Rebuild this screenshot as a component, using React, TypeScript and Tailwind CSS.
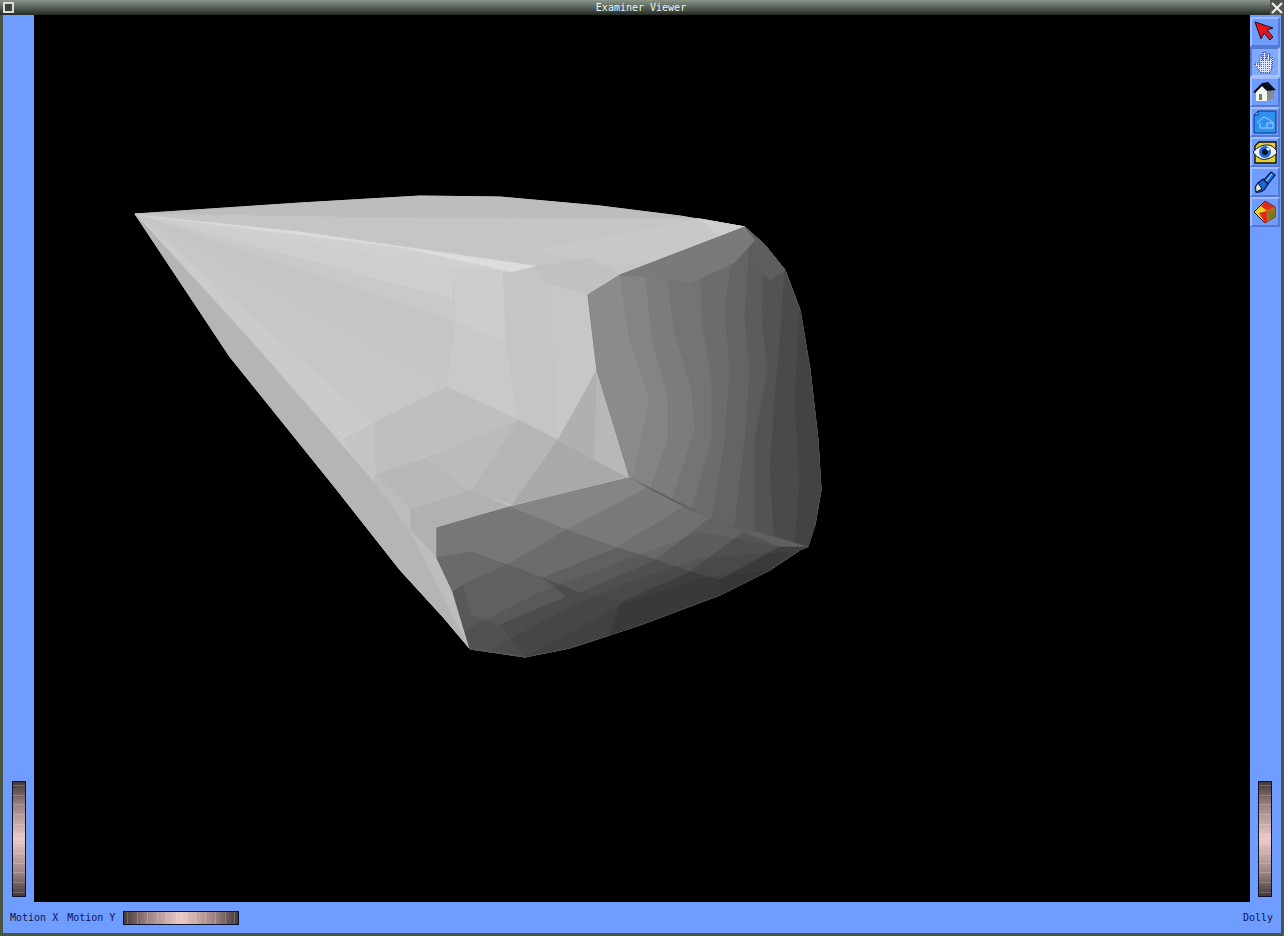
const MONO = "font-['DejaVu_Sans_Mono','Liberation_Mono',monospace]";

// strip boundaries on the dark side of the shape, left to right
const STRIP_LINES = [
  "588,295 597,370 630,478",
  "620,275 630,340 650,400 640,447 632,480",
  "645,268 652,340 668,395 668,440 650,490",
  "667,272 674,330 692,390 695,430 672,500",
  "700,255 702,320 712,380 712,440 692,510",
  "735,238 725,310 730,370 725,440 712,520",
  "750,240 745,320 750,370 745,440 735,528",
  "765,245 762,320 768,370 755,440 755,538",
  "785,270 780,340 775,400 770,470 775,545",
  "800,310 795,400 800,480 795,547",
  "800,310 810,370 818,440 821,490 815,525 808,547",
];
const STRIP_FILLS = ["#8b8b8b", "#848484", "#7c7c7c", "#747474", "#6c6c6c", "#646464", "#5c5c5c", "#535353", "#4a4a4a", "#434343"];

function strip(i: number) {
  return STRIP_LINES[i] + " " + STRIP_LINES[i + 1].split(" ").reverse().join(" ");
}

// faceted shape, screen coordinates, painted back to front
const FACETS: [string, string][] = [
  // silhouette base
  ["135,214 300,203 420,196 500,197 600,206 680,216 745,227 765,245 785,270 800,310 810,370 818,440 821,490 815,525 800,550 770,570 720,595 640,625 570,648 525,657 470,649 443,617 400,570 337,490 230,357", "#c4c4c4"],
  // top band
  ["135,214 300,203 420,196 500,197 600,206 680,216 745,227 700,219 400,218", "#bdbdbd"],
  ["135,214 400,218 700,219 745,227 725,240 620,275 588,295 550,285 503,273 453,267", "#c5c5c5"],
  ["535,250 700,219 725,240 660,262 590,262", "#c8c8c8"],
  ["535,267 590,258 620,275 588,295 550,285", "#c1c1c1"],
  ["700,219 745,227 725,240", "#cfcfcf"],
  // fan from the tip
  ["135,214 453,267 453,300", "#cecece"],
  ["135,214 453,300 456,322 300,270", "#c9c9c9"],
  ["135,214 300,270 456,322 503,342 447,387", "#c5c5c5"],
  ["135,214 447,387 373,423", "#c7c7c7"],
  ["135,214 373,423 343,440", "#cbcbcb"],
  ["135,214 343,440 375,483 250,340", "#c9c9c9"],
  ["135,214 250,340 375,483 410,530 453,592 470,649 443,617 400,570 337,490 230,357", "#b5b5b5"],
  // highlight streak
  ["145,216 300,232 535,266 510,272 400,248", "#dcdcdc"],
  ["145,216 400,248 510,272 453,267", "#d0d0d0"],
  // columns
  ["453,267 503,273 505,342 456,322", "#cdcdcd"],
  ["456,322 505,342 518,420 447,387", "#c9c9c9"],
  ["503,273 550,285 558,440 518,420", "#c5c5c5"],
  ["550,285 588,295 597,370 558,440", "#c7c7c7"],
  // lower left patches
  ["373,423 447,387 518,420 375,475", "#bfbfbf"],
  ["343,440 373,423 375,475 375,483", "#c4c4c4"],
  ["375,475 425,458 470,490 410,510", "#b8b8b8"],
  ["425,458 518,420 472,490", "#bbbbbb"],
  ["518,420 558,440 512,505 472,490", "#b5b5b5"],
  ["410,510 472,490 510,507 437,528 437,558 410,530", "#b1b1b1"],
  ["375,475 410,510 410,530 375,483", "#bcbcbc"],
  ["410,530 437,558 453,592 470,649", "#bdbdbd"],
  ["558,440 595,460 630,478 512,505", "#a9a9a9"],
  ["597,370 558,440 595,460", "#b0b0b0"],
  ["597,370 595,460 630,478", "#b8b8b8"],
  // dark side, filled under the strips
  ["588,295 620,275 745,227 765,245 785,270 800,310 810,370 818,440 821,490 815,525 808,547 780,547 743,533 710,518 630,478 597,370", "#6a6a6a"],
  ...STRIP_FILLS.map((fill, i): [string, string] => [strip(i), fill]),
  // cap along the top ridge
  ["620,275 745,227 755,240 735,262 690,283 665,278", "#7a7a7a"],
  ["745,227 765,245 785,270 770,280 750,262 755,240", "#5e5e5e"],
  // under the lower band, closes the seam along the ridge
  ["437,528 510,507 630,478 710,518 808,547 800,550 770,570 720,595 640,625 570,648 525,657 470,649 453,592 437,558", "#606060"],
  // lower band, rows from the ridge down
  ["510,507 630,478 647,488 567,530", "#858585"],
  ["647,488 683,507 617,548 567,530", "#7a7a7a"],
  ["683,507 710,518 657,560 617,548", "#707070"],
  ["710,518 743,533 690,572 657,560", "#636363"],
  ["743,533 780,547 720,580 690,572", "#555555"],
  ["780,547 808,547 800,550 770,570 720,595 720,580", "#444444"],
  ["437,528 510,507 567,530 507,565 472,552 437,558", "#777777"],
  ["507,565 567,530 617,548 543,578", "#6c6c6c"],
  ["543,578 617,548 657,560 580,593", "#606060"],
  ["580,593 657,560 690,572 620,603", "#555555"],
  ["620,603 690,572 720,580 720,595 640,625 610,635", "#494949"],
  ["437,558 472,552 507,565 463,585 453,592", "#6a6a6a"],
  ["463,585 507,565 543,578 567,597 500,625 470,615", "#606060"],
  ["500,625 567,597 543,578 580,593 620,603 610,635 570,648 525,657", "#525252"],
  ["453,592 463,585 470,615 500,625 525,657 470,649", "#585858"],
  // darkening contours along the bottom edge
  ["465,630 540,592 620,562 700,532 780,547 808,547 800,550 770,570 720,595 640,625 570,648 525,657 470,649", "#00000012"],
  ["490,650 560,612 620,585 700,558 790,552 770,570 720,595 640,625 570,648 525,657", "#00000012"],
  ["525,657 575,630 620,605 700,578 770,570 720,595 640,625 570,648", "#00000012"],
];

const TICKS = Array.from({ length: 12 });

function VWheel() {
  return (
    <div className="flex h-[116px] w-[14px] flex-col justify-between border border-[#0c1230] bg-[linear-gradient(to_bottom,#443838,#9a8280_20%,#eccac8_50%,#9a8280_80%,#443838)] py-[3px]">
      {TICKS.map((_, i) => (
        <div key={i} className="h-px bg-white/20" />
      ))}
    </div>
  );
}

function HWheel() {
  return (
    <div className="flex h-[14px] w-[116px] justify-between border border-[#0c1230] bg-[linear-gradient(to_right,#443838,#9a8280_20%,#eccac8_50%,#9a8280_80%,#443838)] px-[3px]">
      {TICKS.map((_, i) => (
        <div key={i} className="w-px bg-white/20" />
      ))}
    </div>
  );
}

function ToolButton({ active, children }: { active?: boolean; children: React.ReactNode }) {
  return (
    <div
      className={
        active
          ? "flex size-[30px] items-center justify-center border-2 border-t-[#5578d0] border-r-[#a9c3ff] border-b-[#a9c3ff] border-l-[#5578d0] bg-[#7fa8ff]"
          : "flex size-[30px] items-center justify-center border-2 border-t-[#a0bcff] border-r-[#5578d0] border-b-[#5578d0] border-l-[#a0bcff] bg-[#6f9dff]"
      }
    >
      {children}
    </div>
  );
}

function ArrowIcon() {
  return (
    <svg width="24" height="24" viewBox="0 0 24 24">
      <path d="M2 2 L8 19 L11 13 L17 20 L20 17 L14 10 L20 8 Z" fill="#e8141c" stroke="#20101c" strokeWidth="1" />
    </svg>
  );
}

function HandIcon() {
  return (
    <svg width="24" height="24" viewBox="0 0 24 24">
      <defs>
        <pattern id="hand-dither" width="2" height="2" patternUnits="userSpaceOnUse">
          <rect width="2" height="2" fill="#dfe8ff" />
          <rect width="1" height="1" fill="#4f68b8" />
        </pattern>
      </defs>
      <path d="M8 23 L2 15 L2 13 L5 13 L7 16 L7 5 L9 5 L10 11 L10 2 L13 2 L13 10 L15 3 L17 4 L16 11 L18 7 L20 8 L19 18 L17 23 Z" fill="url(#hand-dither)" stroke="#2c3c80" strokeWidth="1" strokeDasharray="1 1" />
    </svg>
  );
}

function HomeIcon() {
  return (
    <svg width="24" height="24" viewBox="0 0 24 24">
      <path d="M3 12 L3 21 L14 21 L14 11 L9 6 Z" fill="#f4f4f0" />
      <path d="M14 11 L21 10 L21 18 L14 21 Z" fill="#8a8a8a" />
      <path d="M0 12 L9 3 L15 2 L23 10 L14 11 L9 6 L2 13 Z" fill="#0c0c14" />
      <rect x="6" y="14" width="3" height="6" fill="#777" />
    </svg>
  );
}

function SetHomeIcon() {
  return (
    <svg width="24" height="24" viewBox="0 0 24 24">
      <path d="M5 1 L23 1 L23 23 L1 23 L1 5 Z" fill="#2f90f4" stroke="#0d2f78" strokeWidth="1" />
      <path d="M5 1 L5 5 L1 5 Z" fill="#9cc8ff" stroke="#0d2f78" strokeWidth="1" />
      <path d="M4 13 L11 7 L17 10 L20 13 L20 18 L7 18 L7 13 M14 18 L14 13 L20 13" fill="none" stroke="#a8d0ff" strokeWidth="1" />
    </svg>
  );
}

function EyeIcon() {
  return (
    <svg width="24" height="24" viewBox="0 0 24 24">
      <path d="M6 2 L23 2 L23 23 L2 23 L2 6 Z" fill="#e0d030" stroke="#101010" strokeWidth="1.4" />
      <path d="M0 12 Q7 4 16 5 Q23 7 24 13 Q16 21 8 19 Q3 17 0 12 Z" fill="#f4f4f4" stroke="#10182c" strokeWidth="1" />
      <circle cx="12" cy="12" r="6" fill="#1c6cd8" />
      <circle cx="12" cy="12" r="3" fill="#06122e" />
      <circle cx="15" cy="9" r="1.6" fill="#fff" />
    </svg>
  );
}

function LightIcon() {
  return (
    <svg width="24" height="24" viewBox="0 0 24 24">
      <path d="M11 10 L18 2 L22 5 L15 14 Z" fill="#1878f0" stroke="#061640" strokeWidth="1.2" />
      <path d="M10 9 L15 14 L11 20 Q7 23 3 22 Q1 17 5 13 Z" fill="#1468d8" stroke="#061640" strokeWidth="1.2" />
      <path d="M3 22 Q1 17 5 13 L9 19 Z" fill="#e6e6c0" stroke="#061640" strokeWidth="1" />
      <path d="M13 11 L19 4" stroke="#bcdcff" strokeWidth="1" />
    </svg>
  );
}

function CubeIcon() {
  return (
    <svg width="24" height="24" viewBox="0 0 24 24">
      <path d="M1 12 L12 1 L22 7 L22 17 L12 23 Z" fill="#e8d020" stroke="#1a1a1a" strokeWidth="1" />
      <path d="M12 1 L22 7 L14 11 L8 6 Z" fill="#e02c1c" />
      <path d="M6 13 L14 11 L15 22 L12 23 Z" fill="#e0281c" />
      <path d="M14 11 L22 7 L22 17 L15 22 Z" fill="#a07018" />
      <path d="M16 14 L21 10 L21 16 L16 20 Z" fill="#5c8420" />
    </svg>
  );
}

export default function App() {
  return (
    <div className="flex h-[936px] w-[1284px] flex-col overflow-hidden bg-[#4a554a]">
      {/* window title bar */}
      <div className="flex h-[15px] shrink-0 items-center justify-between bg-[linear-gradient(to_bottom,#8b968a,#5d665d_45%,#242924)]">
        <div className="ml-[3px] size-[11px] border-2 border-[#d8ddd8] bg-[#3a423a]" />
        <span className={`${MONO} mr-[2px] text-[10px] leading-none text-[#f0f4f0]`}>Examiner Viewer</span>
        <span className="flex h-[15px] w-[14px] items-center justify-center bg-[#4e554e]">
          <svg width="12" height="12" viewBox="0 0 12 12">
            <path d="M1 1 L11 11 M11 1 L1 11" stroke="#f2f2f2" strokeWidth="2" />
          </svg>
        </span>
      </div>

      <div className="flex min-h-0 flex-1 px-[3px]">
        <div className="flex min-w-0 flex-1 flex-col">
          <div className="flex min-h-0 flex-1">
            {/* left rail */}
            <div className="flex w-[31px] shrink-0 flex-col items-center justify-end bg-[#6f9dff] pb-[5px] pl-[1px]">
              <VWheel />
            </div>

            <div className="min-w-0 flex-1 bg-black">
              <svg className="block h-full w-full" viewBox="34 15 1216 887">
                {FACETS.map(([points, fill], i) => (
                  // same-colour stroke hides the anti-aliased seams between facets
                  <polygon key={i} points={points} fill={fill} stroke={fill.length === 7 ? fill : "none"} strokeWidth="0.8" strokeLinejoin="round" />
                ))}
              </svg>
            </div>

            {/* right rail */}
            <div className="flex w-[31px] shrink-0 flex-col items-center justify-between bg-[#6f9dff] pt-[2px] pr-[1px] pb-[5px]">
              <div className="flex flex-col">
                <ToolButton><ArrowIcon /></ToolButton>
                <ToolButton active><HandIcon /></ToolButton>
                <ToolButton><HomeIcon /></ToolButton>
                <ToolButton><SetHomeIcon /></ToolButton>
                <ToolButton><EyeIcon /></ToolButton>
                <ToolButton><LightIcon /></ToolButton>
                <ToolButton><CubeIcon /></ToolButton>
              </div>
              <VWheel />
            </div>
          </div>

          {/* bottom rail */}
          <div className={`${MONO} flex h-[31px] shrink-0 items-center bg-[#6f9dff] pr-[8px] pl-[7px] text-[10px] leading-none text-[#0c1450]`}>
            <span>Motion X</span>
            <span className="ml-[9px]">Motion Y</span>
            <div className="ml-[8px]">
              <HWheel />
            </div>
            <span className="ml-auto">Dolly</span>
          </div>
        </div>
      </div>
      <div className="h-[3px] shrink-0 bg-[#4a554a]" />
    </div>
  );
}
